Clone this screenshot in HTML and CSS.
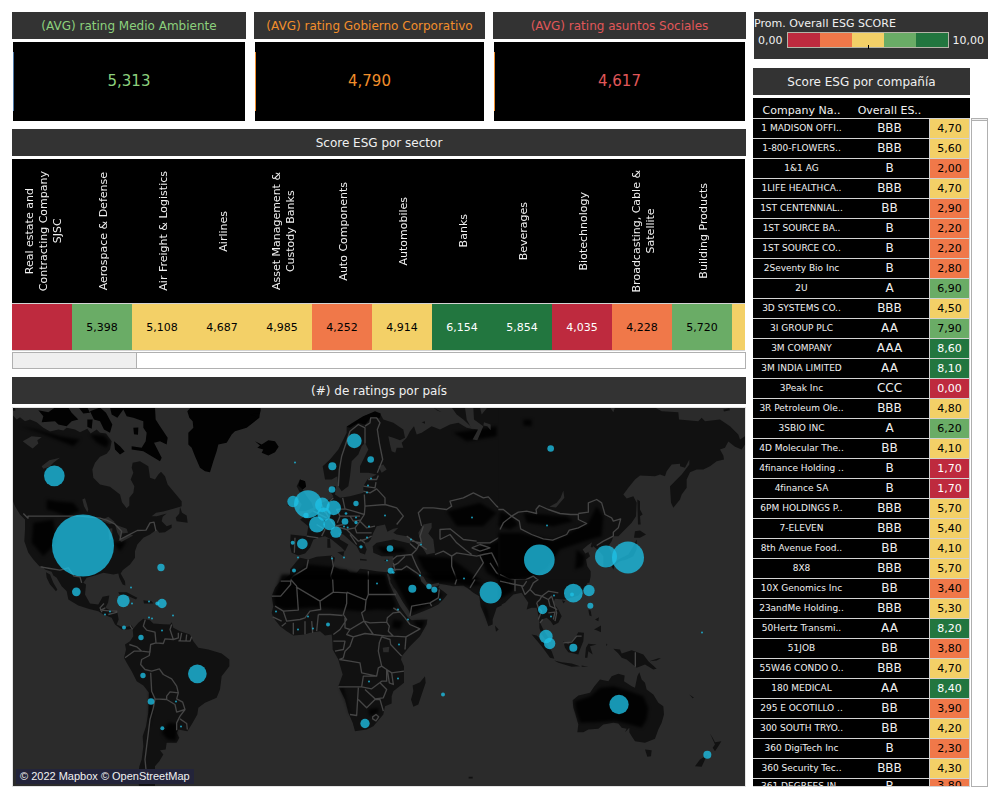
FILE: index.html
```html
<!DOCTYPE html>
<html lang="es">
<head>
<meta charset="utf-8">
<meta name="viewport" content="width=device-width, initial-scale=1">
<title>ESG ratings</title>
<link rel="stylesheet" href="styles.css">
</head>
<body>
<main class="dashboard">
  <div class="main-column">
    <section class="kpis">
      <article class="kpi kpi-green">
        <h2 class="panel-title">(AVG) rating Medio Ambiente</h2>
        <p class="kpi-value">5,313</p>
      </article>
      <article class="kpi kpi-orange">
        <h2 class="panel-title">(AVG) rating Gobierno Corporativo</h2>
        <p class="kpi-value">4,790</p>
      </article>
      <article class="kpi kpi-red">
        <h2 class="panel-title">(AVG) rating asuntos Sociales</h2>
        <p class="kpi-value">4,617</p>
      </article>
    </section>

    <section class="sectors">
      <h2 class="panel-title">Score ESG por sector</h2>
      <div class="sector-view">
        <table class="sector-table">
          <thead>
            <tr>
              <th><span>Real estate and<br>Contracting Company<br>SJSC</span></th>
              <th><span>Aerospace &amp; Defense</span></th>
              <th><span>Air Freight &amp; Logistics</span></th>
              <th><span>Airlines</span></th>
              <th><span>Asset Management &amp;<br>Custody Banks</span></th>
              <th><span>Auto Components</span></th>
              <th><span>Automobiles</span></th>
              <th><span>Banks</span></th>
              <th><span>Beverages</span></th>
              <th><span>Biotechnology</span></th>
              <th><span>Broadcasting, Cable &amp;<br>Satellite</span></th>
              <th><span>Building Products</span></th>
              <th></th>
            </tr>
          </thead>
          <tbody>
            <tr>
              <td class="s1"></td>
              <td class="s4">5,398</td>
              <td class="s3">5,108</td>
              <td class="s3">4,687</td>
              <td class="s3">4,985</td>
              <td class="s2">4,252</td>
              <td class="s3">4,914</td>
              <td class="s5">6,154</td>
              <td class="s5">5,854</td>
              <td class="s1">4,035</td>
              <td class="s2">4,228</td>
              <td class="s4">5,720</td>
              <td class="s3"></td>
            </tr>
          </tbody>
        </table>
      </div>
      <div class="scroll-x"><div class="scroll-x-thumb"></div></div>
    </section>

    <section class="countries">
      <h2 class="panel-title">(#) de ratings por país</h2>
      <div class="map">
        <svg class="map-canvas" viewBox="39 114 2196 1137" preserveAspectRatio="xMidYMid slice" role="img" aria-label="(#) de ratings por país">
          <!-- North America and Greenland -->
          <g class="land">
            <path d="M39 138L50 150 60 143 75 155 90 150 110 158 130 175 150 186 175 180 190 183 200 175 225 180 240 188 262 178 272 192 290 180 300 190 318 192 335 215 330 240 320 253 300 262 285 280 277 300 280 325 300 345 330 352 360 375 366 398 380 416 388 408 388 385 400 370 403 350 392 330 400 310 395 295 398 280 420 275 445 290 450 325 465 330 475 315 483 307 495 320 503 345 520 365 545 395 545 410 520 418 490 426 468 430 455 440 470 440 500 432 488 442 485 455 500 470 515 465 515 475 495 488 478 490 470 480 450 495 430 505 412 525 405 545 405 565 390 585 368 602 362 612 375 635 376 648 368 645 358 625 355 612 340 615 310 610 285 618 260 625 250 640 258 645 255 675 270 702 295 705 308 682 328 678 324 700 316 715 330 722 352 728 356 750 350 765 372 775 395 768 400 776 385 780 365 780 345 765 335 745 310 735 295 725 265 718 235 708 205 690 200 665 185 650 170 625 160 618 155 607 135 600 128 590 118 590 100 570 85 550 73 515 75 480 75 450 60 435 45 410 39 395Z"/>
            <path d="M138 608L150 615 160 640 172 660 168 665 150 645 140 625ZM540 412L546 430 560 438 563 460 530 455 527 445 538 432Z"/>
            <path d="M355 668L380 668 412 685 408 690 380 678 358 675ZM430 692L455 695 460 702 432 702ZM39 114L55 114 52 122 39 124Z"/>
          </g>
          <g class="land-dark">
            <path d="M115 122L145 128 165 114 205 114 215 130 235 150 215 155 200 170 175 165 165 155 125 158 130 140ZM330 114L465 114 467 150 480 170 503 205 500 225 480 215 462 220 485 265 480 275 455 260 430 245 395 240 395 230 425 235 437 215 440 190 430 175 430 155 400 145 380 140 370 120 352 145 335 135ZM270 125L300 114 318 130 337 165 330 190 312 180 300 155 282 150ZM236 114L262 114 270 130 250 132ZM342 215L360 230 374 246 360 255 345 240ZM400 175L415 174 414 196 402 194ZM262 150L278 150 275 178 262 172Z"/>
            <path d="M572 114L782 114 778 145 740 175 705 185 695 195 680 220 655 225 650 245 640 275 630 308 615 305 600 295 585 260 575 235 565 225 565 190 580 175 578 155 568 145 562 125Z"/>
          </g>
          <g class="shade">
            <path d="M140 390L170 395 220 400 240 425 200 440 160 425 140 420ZM270 195L312 198 328 215 320 235 290 220ZM100 460L160 450 170 520 130 560 95 520ZM340 520L380 515 360 545ZM60 170L110 180 180 200 240 210 220 230 120 190Z"/>
          </g>
          <g class="sea">
            <path d="M68 215L95 200 125 203 112 212 115 222 98 237 85 228ZM125 290L148 272 180 265 160 280 148 292 130 298ZM247 390L255 386 260 402 265 420 262 428 252 410ZM302 452L325 442 345 458 330 464ZM325 478L337 476 337 505 328 512ZM345 465L380 478 384 490 366 492 362 508 352 490ZM355 512L390 495 400 498 365 517ZM45 115L75 120 65 135 48 132Z"/>
          </g>
          <g class="border">
            <path d="M70 432L84 446 84 440 240 440 300 446 320 452 345 464 365 485 360 510 385 497 412 483 438 482 450 460 462 458 468 485M122 592L150 597 180 602 205 595 222 620 240 622 245 640M312 702L300 715 306 728M316 715L302 722 328 724 352 725M325 735L352 728M390 768L398 780"/>
          </g>

          <!-- South America -->
          <g transform="translate(0 630)">
            <path class="land" d="M398 150L415 130 430 118 450 122 460 132 490 134 510 135 515 128 520 145 540 155 570 165 580 185 595 205 625 210 665 222 688 240 688 260 665 290 660 330 650 355 615 370 595 385 592 405 575 435 562 455 535 450 530 460 538 475 530 490 500 490 497 510 480 512 490 525 478 545 465 560 465 622 418 622 413 600 418 560 425 540 430 500 428 470 438 440 445 400 447 340 430 318 410 305 395 275 380 250 372 235 378 210 375 195 390 185 400 170Z"/>
            <path class="shade" d="M505 430L532 432 530 462 528 484 502 480 485 460ZM449 335L456 335 456 400 446 440Z"/>
            <path class="border" d="M436 120L430 140 440 152 465 158 468 190 452 195 450 218 425 215 410 202 388 195M425 215L402 215 375 235M452 195L448 228 425 240 422 255 435 270 455 275 478 268 490 285 515 298 530 320 535 340 510 337 500 350 500 360 465 358 455 335 452 280M465 158L468 190 490 192 495 178 520 180 510 150 515 135M520 180L535 175 535 160M540 184L545 160M558 184L560 165M535 184L570 185 575 172M535 340L530 358 548 368 555 390 530 398 525 375 500 360M555 390L540 410 530 430 530 452M540 418L560 432 562 450M465 358L460 385 450 420 445 460 440 500 435 540 438 570"/>
          </g>

          <!-- Europe, north Africa, west Asia -->
          <g transform="translate(750 0)">
            <path class="land" d="M375 128L392 135 400 150 430 160 460 180 465 205 450 212 430 205 415 200 420 225 425 245 436 250 440 235 460 235 455 220 470 205 480 185 492 170 500 195 515 190 545 170 570 180 600 165 625 160 650 175 672 180 640 150 620 135 605 114 760 114 760 640 90 640 120 615 120 600 140 575 150 565 175 570 200 562 245 558 255 565 250 590 270 600 290 600 300 610 320 610 330 598 350 600 380 605 410 608 424 605 430 580 430 560 395 560 370 550 368 530 380 520 430 510 480 522 485 510 470 500 440 495 430 490 445 475 430 478 412 487 405 465 380 470 370 490 362 510 355 518 342 520 350 540 345 555 330 550 320 530 308 520 280 495 265 490 270 510 295 525 285 545 275 535 245 510 225 500 205 505 190 510 180 535 165 552 145 558 125 550 120 530 122 495 170 500 175 470 150 450 165 440 190 425 215 400 240 390 250 380 240 365 245 350 258 350 255 375 270 385 300 380 340 370 340 350 352 330 380 315 355 310 330 310 330 290 340 270 355 240 345 220 335 230 325 255 305 275 300 320 295 350 275 365 265 350 262 320 245 330 225 330 218 290 240 270 265 240 290 190 290 172 310 158 340 140Z"/>
            <path class="land" d="M150 330L165 335 168 350 158 360 170 380 185 400 190 415 165 425 145 425 155 405 145 390 150 370 140 350ZM115 385L135 380 140 400 130 412 113 408ZM262 548L283 545 280 560ZM232 508L240 508 242 535 232 535ZM330 568L350 570 350 574 330 572ZM402 572L416 568 412 577ZM515 158L525 155 525 163ZM550 114L575 128 560 122Z"/>
            <path class="land-dark" d="M15 215L35 225 55 212 75 215 86 232 75 248 55 258 35 250 40 240 22 235 30 228ZM0 114L32 120 30 132 0 134ZM0 165L18 150 18 140 0 135ZM150 330L165 335 168 352 158 360 145 348ZM290 172L340 140 375 125 392 132 390 145 360 148 345 165 325 160 300 175Z"/>
            <path class="shade" d="M132 616L175 585 245 592 330 612 405 618 405 655 90 655ZM440 600L480 600 520 655 430 655ZM500 558L600 565 650 600 700 640 560 635 520 600ZM680 535L760 510 760 640 710 610ZM590 425L690 400 740 430 700 470 620 470ZM380 530L460 535 470 550 400 552ZM610 190L740 170 740 200 650 215Z"/>
            <g class="sea">
              <path d="M505 490L520 465 545 460 545 475 535 492 550 510 555 550 530 555 515 530ZM645 114L670 114 672 150 700 170 682 212 668 210 684 180 665 178 650 150ZM385 290L400 285 410 300 395 310ZM410 612L416 614 426 640 418 642ZM690 114L712 114 695 135ZM702 158L722 165 722 182 712 170 700 168Z"/>
            </g>
            <path class="border" d="M265 350L268 300 275 260 290 215 300 185 325 165 345 175 345 222M345 170L360 160 362 145 380 145 390 160 382 180 388 220 398 270 382 310M355 330L380 330 385 318M340 350L375 355 378 338M340 365L360 370 380 358 405 385 405 405 345 410 343 375M278 385L285 418 310 425 343 435 345 410M405 405L440 415 460 440 440 465M343 435L330 455 350 475 375 470M285 418L260 420 270 440 300 440 330 440M250 385L235 400 228 430 240 450 255 470 280 465M170 500L205 505M215 405L225 430M190 425L230 445M200 465L225 480 215 500M255 470L290 480 315 475 330 455M290 480L310 500 325 515 345 510 365 500M315 475L320 490 345 490 365 490M300 495L320 525 M330 510L345 520M270 440L262 460M300 440L310 455 330 452M135 505L133 550"/>
            <path class="border" d="M470 500L500 520 530 540M480 522L500 540 485 555 440 560 428 570M485 515L515 520M500 540L510 520M485 555L500 590 512 612M428 590L445 580 465 560M430 600L455 600 470 590 500 610 512 620M430 580L435 605M515 470L505 430 520 415 550 415 590 420 605 410 600 395 640 385 670 370 700 385 715 382 740 410 770 430M515 520L510 500 520 470M570 510L570 480 600 478 640 510 680 515M570 510L600 495 620 520 645 540 665 555M605 560L620 550 680 560 700 555M605 560L605 590 620 630 660 640 700 580 690 560M555 555L580 545 605 560M680 520L720 520 770 490M665 535L690 525 720 535 690 545 665 535M700 555L725 550 745 590 770 620M720 580L740 610 780 635M245 560L250 590 242 620 255 650M175 570L170 595 130 620M120 632L130 620M355 605L355 640"/>
          </g>

          <!-- East Asia -->
          <g transform="translate(1500 0)">
            <path class="land" d="M-5 114L330 114 340 128 345 114 465 114 485 125 535 128 537 150 595 155 605 145 615 155 660 150 690 170 715 195 720 210 735 200 735 225 725 240 705 232 685 216 675 235 660 240 670 258 672 270 650 275 630 290 610 300 590 300 570 308 560 330 560 355 545 375 540 390 520 415 513 400 510 350 525 335 545 315 568 285 568 270 555 295 540 290 540 283 515 285 500 305 495 320 480 315 465 320 420 318 405 330 385 355 370 375 380 387 400 380 410 400 408 440 395 460 375 480 355 500 340 500 335 515 325 530 335 550 337 580 325 595 310 592 310 560 298 545 280 530 265 548 270 560 258 570 262 590 272 605 272 620 268 640 -5 640Z"/>
            <path class="land" d="M412 390L420 395 420 420 428 435 420 440 422 465 414 465ZM405 485L420 483 438 495 420 505 402 505ZM410 510L410 540 400 560 380 570 360 575 345 585 340 600 335 590 355 570 385 555 400 530ZM670 120L688 116 690 122 672 126Z"/>
            <path class="shade" d="M-5 490L60 490 160 512 200 495 240 470 262 465 290 410 310 440 305 500 270 510 180 540 140 600 90 625 -5 640ZM0 425L35 440 55 465 30 480 -5 470ZM70 150L95 150 95 170 70 168ZM70 430L200 440 220 455 160 470 80 460ZM230 540L255 560 250 590 225 600Z"/>
            <path class="sea" d="M190 363L193 385 168 414 148 412 170 400 182 385ZM248 540L262 528 276 518 272 532 284 540 270 545 256 552Z"/>
            <path class="border" d="M-5 420L10 420 35 440 58 455 62 478 95 495 130 508 158 512 200 495 208 482 235 475 260 462 235 450 235 435 212 435 180 432 145 420 118 408 108 420 110 432 80 425 55 428 35 440M35 440L10 460 0 480M235 432L265 428 265 400 290 390 305 400 315 435 335 445 340 455 362 448 355 475 340 488 340 500M340 500L310 515 290 528M0 615L30 630 75 632 100 620 115 632 110 650M40 630L45 655 75 660"/>
          </g>

          <!-- Africa, Arabia, India -->
          <g transform="translate(750 630)">
            <path class="land" d="M412 0L435 50 450 80 472 112 485 122 532 120 530 135 510 170 480 200 455 230 453 240 462 260 462 310 430 335 425 350 425 372 405 380 400 405 370 440 350 450 315 455 308 430 295 400 285 360 265 320 278 285 265 240 248 210 247 185 245 165 225 168 210 155 180 160 165 165 130 168 110 155 90 140 70 115 65 100 70 80 65 50 75 25 95 0Z"/>
            <path class="land" d="M755 0L755 78 740 85 735 100 728 120 728 135 715 140 705 110 692 80 688 50 670 40 655 28 640 18 610 20 570 13 565 25 580 35 592 45 580 60 565 75 545 85 520 95 482 110 478 95 460 70 440 35 422 10 420 0ZM525 290L527 310 515 345 505 375 490 382 483 360 490 335 488 318 510 308ZM735 138L746 150 738 157ZM656 592L668 592 668 597 656 597Z"/>
            <path class="shade" d="M95 -15L405 -15 428 50 440 80 425 92 380 90 330 95 270 90 190 84 105 90 74 80 70 50 80 25ZM425 -15L500 -15 520 15 560 35 578 45 556 66 520 86 484 100 468 70ZM490 124L525 124 515 150 500 140ZM270 324L280 324 298 395 303 405 298 402 285 360Z"/>
            <path class="shade" d="M520 -15L650 -15 700 15 660 20 600 10 550 8ZM697 70L710 90 718 130 708 110ZM355 390L385 385 385 400 360 410ZM430 120L460 125 450 150 425 145Z"/>
            <path class="sea" d="M508 -14L520 -8 530 8 545 14 566 10 570 16 556 22 545 28 530 22 514 6ZM398 205L418 202 416 218 400 218Z"/>
            <path class="border" d="M92 5L122 5 122 15 92 50 65 50M122 0L140 20 145 92 100 95 75 80M138 22L210 65 212 90 180 95 165 115 150 120 110 125 100 95M210 65L250 38 290 40 290 72 280 105 290 120 270 150 250 165M250 38L248 0M290 38L348 62 345 92 335 100 342 125 300 150 285 145 285 115M355 0L355 45 438 45M348 62L355 45M342 125L360 130 410 128 412 115 430 100 450 98M410 128L418 140 415 155 430 170 468 172 510 148 480 135 465 115 450 98 430 85M342 125L370 165 410 170 430 170M300 150L290 165 310 172 345 162 370 165M310 172L300 200 285 215 280 235 268 240M250 185L285 185 280 210 255 215M268 240L300 245 330 250 335 280 380 290 385 265 395 260 385 215 388 190 395 172M395 172L420 180 422 195 455 230M468 172L465 210M380 290L340 290 335 322 365 328 395 305 410 305 410 270 395 260M410 270L425 280 462 275M425 280L430 315 418 310 412 270M265 322L335 322M325 325L320 408 300 405M325 360L350 385 375 360 390 360 400 395M345 330L375 358 400 355 410 330 390 310M368 412L378 405 386 412 378 424 368 418ZM205 105L240 105 278 108M205 105L200 155M185 125L188 160M165 125L165 165M130 130L130 165M95 140L108 130M68 112L95 125M480 110L485 80 540 70 545 80M540 70L565 55 568 30M620 0L615 15M660 25L675 0"/>
          </g>

          <!-- Southeast Asia and Oceania -->
          <g transform="translate(1500 630)">
            <path class="land" d="M-5 0L268 0 255 25 235 48 215 55 195 60 188 60 165 58 160 70 175 90 185 110 175 130 160 137 152 125 140 115 125 120 120 130 130 150 143 170 150 190 140 185 125 165 118 145 118 120 110 85 95 85 80 90 85 70 65 40 40 45 15 70 -5 80ZM95 165L110 168 135 190 155 215 163 238 150 235 125 200ZM163 243L185 248 215 252 240 260 215 262 175 250ZM245 258L265 262 245 262ZM190 185L205 195 225 175 235 158 252 160 250 185 240 210 235 225 205 218 195 205ZM258 205L265 193 290 195 270 200 278 225 265 215 262 235 255 235ZM340 208L360 210 365 222 395 212 430 225 445 245 470 268 460 270 435 255 410 265 380 240 365 235 355 222ZM448 245L475 236 483 236 470 243ZM265 90L272 93 275 110 268 108ZM285 120L297 113 295 125ZM282 150L303 138 303 158 290 152ZM186 62L196 65 190 72ZM318 192L322 195 320 200ZM435 510L455 512 453 530 442 532ZM630 462L638 475 645 488 664 485 655 500 645 515 638 505 645 495ZM625 525L615 540 605 562 585 560 600 540ZM568 345L582 355 578 356Z"/>
            <path class="land" d="M218 362L235 348 270 340 283 320 300 300 325 305 335 290 355 283 374 288 372 305 395 320 405 325 412 290 418 278 425 300 435 310 440 330 460 345 475 370 490 380 492 405 485 430 475 450 465 478 435 490 405 485 395 470 388 458 388 445 375 458 380 448 365 445 355 432 340 430 310 435 295 448 265 450 250 458 232 458 235 435 225 400 220 385Z"/>
            <path class="shade" d="M224 366L270 350 300 325 340 320 390 335 430 350 445 385 440 420 425 445 390 435 345 424 290 428 240 430 228 395ZM-5 -10L30 -10 45 25 35 38 -5 60Z"/>
            <path class="border" d="M406 218L406 262M45 0L45 35M0 5L45 15 70 20 80 5M65 20L75 45 90 30 100 10 115 0M90 30L105 45 125 50 145 35 175 40M110 70L120 60 125 50M125 50L145 60 150 80 172 90M110 70L115 85 125 95 115 120M145 60L155 50 170 100 165 125M145 100L165 98 160 120M190 190L215 188 230 170 245 170M120 130L128 120"/>
          </g>

          <!-- Rating counts -->
          <g class="bubbles">
            <circle cx="249" cy="528" r="93"/><circle cx="163" cy="319" r="31"/><circle cx="483" cy="594" r="11"/><circle cx="393" cy="654" r="3"/>
            <g transform="translate(0 630)">
              <circle cx="229" cy="37" r="13"/><circle cx="370" cy="64" r="19"/><circle cx="396" cy="72" r="3"/><circle cx="447" cy="66" r="3"/><circle cx="472" cy="72" r="6"/><circle cx="486" cy="72" r="14"/><circle cx="519" cy="108" r="3"/><circle cx="447" cy="114" r="3"/><circle cx="456" cy="117" r="3"/><circle cx="330" cy="96" r="3"/><circle cx="315" cy="105" r="3"/><circle cx="372" cy="144" r="6"/><circle cx="486" cy="153" r="3"/><circle cx="423" cy="174" r="8"/><circle cx="429" cy="288" r="8"/><circle cx="592" cy="283" r="28"/><circle cx="453" cy="366" r="10"/><circle cx="528" cy="366" r="3"/><circle cx="487" cy="446" r="6"/><circle cx="543" cy="441" r="3"/>
            </g>
            <g transform="translate(750 0)">
              <circle cx="135" cy="279" r="3"/><circle cx="313" cy="214" r="22"/><circle cx="362" cy="270" r="10"/><circle cx="247" cy="290" r="12"/><circle cx="246" cy="360" r="10"/><circle cx="363" cy="327" r="3"/><circle cx="354" cy="348" r="3"/><circle cx="351" cy="369" r="3"/><circle cx="318" cy="402" r="8"/><circle cx="174" cy="404" r="42"/><circle cx="129" cy="396" r="17"/><circle cx="217" cy="406" r="22"/><circle cx="251" cy="415" r="22"/><circle cx="222" cy="434" r="20"/><circle cx="168" cy="438" r="8"/><circle cx="201" cy="465" r="24"/><circle cx="238" cy="464" r="18"/><circle cx="258" cy="488" r="17"/><circle cx="285" cy="456" r="10"/><circle cx="288" cy="432" r="4"/><circle cx="318" cy="444" r="3"/><circle cx="318" cy="459" r="5"/><circle cx="357" cy="471" r="3"/><circle cx="282" cy="471" r="3"/><circle cx="293" cy="474" r="3"/><circle cx="405" cy="438" r="3"/><circle cx="351" cy="504" r="3"/><circle cx="333" cy="532" r="5"/><circle cx="157" cy="523" r="16"/><circle cx="128" cy="520" r="6"/><circle cx="144" cy="564" r="3"/><circle cx="132" cy="603" r="6"/><circle cx="246" cy="567" r="3"/><circle cx="282" cy="564" r="3"/><circle cx="411" cy="573" r="3"/><circle cx="420" cy="537" r="10"/><circle cx="422" cy="604" r="9"/><circle cx="430" cy="609" r="4"/><circle cx="381" cy="642" r="3"/><circle cx="483" cy="510" r="3"/><circle cx="513" cy="525" r="3"/><circle cx="510" cy="618" r="3"/><circle cx="642" cy="627" r="3"/><circle cx="666" cy="444" r="3"/>
            </g>
            <g transform="translate(750 630)">
              <circle cx="487" cy="28" r="12"/><circle cx="537" cy="21" r="8"/><circle cx="553" cy="31" r="9"/><circle cx="570" cy="60" r="3"/><circle cx="722" cy="39" r="33"/><circle cx="78" cy="96" r="3"/><circle cx="174" cy="111" r="3"/><circle cx="144" cy="150" r="3"/><circle cx="189" cy="147" r="3"/><circle cx="234" cy="135" r="6"/><circle cx="444" cy="90" r="3"/><circle cx="474" cy="120" r="3"/><circle cx="447" cy="195" r="3"/><circle cx="357" cy="306" r="3"/><circle cx="444" cy="297" r="3"/><circle cx="579" cy="345" r="6"/><circle cx="345" cy="432" r="14"/>
            </g>
            <g transform="translate(1500 0)">
              <circle cx="152" cy="237" r="10"/><circle cx="141" cy="468" r="3"/><circle cx="118" cy="571" r="46"/><circle cx="318" cy="561" r="33"/><circle cx="384" cy="564" r="48"/>
            </g>
            <g transform="translate(1500 630)">
              <circle cx="220" cy="41" r="28"/><circle cx="216" cy="45" r="6"/><circle cx="267" cy="33" r="17"/><circle cx="271" cy="79" r="9"/><circle cx="162" cy="48" r="3"/><circle cx="128" cy="90" r="14"/><circle cx="153" cy="111" r="3"/><circle cx="138" cy="171" r="20"/><circle cx="149" cy="192" r="17"/><circle cx="220" cy="205" r="12"/><circle cx="606" cy="159" r="3"/><circle cx="357" cy="375" r="29"/><circle cx="622" cy="526" r="12"/>
            </g>
          </g>
        </svg>
        <p class="attribution">© 2022 Mapbox © OpenStreetMap</p>
      </div>
    </section>
  </div>

  <aside class="side-column">
    <section class="legend">
      <h2 class="legend-title">Prom. Overall ESG SCORE</h2>
      <div class="legend-scale">
        <span>0,00</span>
        <div class="legend-bar">
          <i class="s1"></i><i class="s2"></i><i class="s3"></i><i class="s4"></i><i class="s5"></i>
        </div>
        <span>10,00</span>
      </div>
    </section>

    <section class="companies">
      <h2 class="panel-title">Score ESG por compañía</h2>
      <div class="company-view">
        <div class="company-clip">
          <table class="company-table">
            <thead><tr><th>Company Na..</th><th>Overall ES..</th><th></th></tr></thead>
            <tbody>
              <tr><td>1 MADISON OFFI..</td><td>BBB</td><td class="s3">4,70</td></tr>
              <tr><td>1-800-FLOWERS..</td><td>BBB</td><td class="s3">5,60</td></tr>
              <tr><td>1&amp;1 AG</td><td>B</td><td class="s2">2,00</td></tr>
              <tr><td>1LIFE HEALTHCA..</td><td>BBB</td><td class="s3">4,70</td></tr>
              <tr><td>1ST CENTENNIAL..</td><td>BB</td><td class="s2">2,90</td></tr>
              <tr><td>1ST SOURCE BA..</td><td>B</td><td class="s2">2,20</td></tr>
              <tr><td>1ST SOURCE CO..</td><td>B</td><td class="s2">2,20</td></tr>
              <tr><td>2Seventy Bio Inc</td><td>B</td><td class="s2">2,80</td></tr>
              <tr><td>2U</td><td>A</td><td class="s4">6,90</td></tr>
              <tr><td>3D SYSTEMS CO..</td><td>BBB</td><td class="s3">4,50</td></tr>
              <tr><td>3I GROUP PLC</td><td>AA</td><td class="s4">7,90</td></tr>
              <tr><td>3M COMPANY</td><td>AAA</td><td class="s5">8,60</td></tr>
              <tr><td>3M INDIA LIMITED</td><td>AA</td><td class="s5">8,10</td></tr>
              <tr><td>3Peak Inc</td><td>CCC</td><td class="s1">0,00</td></tr>
              <tr><td>3R Petroleum Ole..</td><td>BBB</td><td class="s3">4,80</td></tr>
              <tr><td>3SBIO INC</td><td>A</td><td class="s4">6,20</td></tr>
              <tr><td>4D Molecular The..</td><td>BB</td><td class="s3">4,10</td></tr>
              <tr><td>4finance Holding ..</td><td>B</td><td class="s1">1,70</td></tr>
              <tr><td>4finance SA</td><td>B</td><td class="s1">1,70</td></tr>
              <tr><td>6PM HOLDINGS P..</td><td>BBB</td><td class="s3">5,70</td></tr>
              <tr><td>7-ELEVEN</td><td>BBB</td><td class="s3">5,40</td></tr>
              <tr><td>8th Avenue Food..</td><td>BB</td><td class="s3">4,10</td></tr>
              <tr><td>8X8</td><td>BBB</td><td class="s3">5,70</td></tr>
              <tr><td>10X Genomics Inc</td><td>BB</td><td class="s2">3,40</td></tr>
              <tr><td>23andMe Holding..</td><td>BBB</td><td class="s3">5,30</td></tr>
              <tr><td>50Hertz Transmi..</td><td>AA</td><td class="s5">8,20</td></tr>
              <tr><td>51JOB</td><td>BB</td><td class="s2">3,80</td></tr>
              <tr><td>55W46 CONDO O..</td><td>BBB</td><td class="s3">4,70</td></tr>
              <tr><td>180 MEDICAL</td><td>AA</td><td class="s5">8,40</td></tr>
              <tr><td>295 E OCOTILLO ..</td><td>BB</td><td class="s2">3,90</td></tr>
              <tr><td>300 SOUTH TRYO..</td><td>BB</td><td class="s3">4,20</td></tr>
              <tr><td>360 DigiTech Inc</td><td>B</td><td class="s2">2,30</td></tr>
              <tr><td>360 Security Tec..</td><td>BBB</td><td class="s3">4,30</td></tr>
              <tr><td>361 DEGREES IN..</td><td>B</td><td class="s2">3,80</td></tr>
            </tbody>
          </table>
        </div>
        <div class="scroll-y"><div class="scroll-y-thumb"></div></div>
      </div>
    </section>
  </aside>
</main>
</body>
</html>
```
FILE: styles.css
```css
* { box-sizing: border-box; }

body {
  margin: 0;
  background: #fff;
  color: #f0f0f0;
  font-family: "DejaVu Sans", Verdana, sans-serif;
  font-size: 11px;
}

h2, p { margin: 0; font-weight: normal; }

table { border-collapse: separate; border-spacing: 0; table-layout: fixed; }
th, td { padding: 0; font-weight: normal; text-align: center; vertical-align: middle; }

.dashboard {
  display: grid;
  grid-template-columns: minmax(0, 1fr) 235px;
  gap: 7px;
  height: 100vh;
  min-height: 640px;
  padding: 12px 11px 12px 12px;
}

.main-column {
  display: flex;
  flex-direction: column;
  gap: 8px;
  min-height: 0;
}

.panel-title {
  flex: none;
  height: 27px;
  line-height: 28px;
  background: #333;
  font-size: 12px;
  text-align: center;
  white-space: nowrap;
}

/* Score colours */
.s1 { background: #be2a3e; color: #fff; }
.s2 { background: #f07849; color: #000; }
.s3 { background: #f3d067; color: #000; }
.s4 { background: #6aac66; color: #000; }
.s5 { background: #22763f; color: #fff; }

/* Averages */
.kpis {
  display: grid;
  grid-template-columns: 234fr 231fr 253fr;
  gap: 8px;
}
.kpi-green { color: #8cd17d; --mark: #4e79a7; }
.kpi-orange { color: #f28e2b; --mark: #f28e2b; }
.kpi-red { color: #e15759; --mark: #f28e2b; }
.kpi-value {
  height: 79px;
  margin: 3px 1px 0;
  background: linear-gradient(var(--mark), var(--mark)) left center / 1px 59px no-repeat #000;
  font-size: 15px;
  line-height: 79px;
  text-align: center;
}

/* Sectors */
.sector-view {
  margin: 3px 1px 0 0;
  overflow: hidden;
  background: #000;
}
.sector-table { width: 780px; }
.sector-table th {
  width: 60px;
  height: 145px;
  padding: 3px 0 0 3px;
  border-bottom: 1px solid #d3d3d3;
}
.sector-table th span {
  display: inline-block;
  writing-mode: vertical-rl;
  transform: rotate(180deg);
  line-height: 14px;
  white-space: nowrap;
}
.sector-table td {
  height: 47px;
  border-bottom: 1px solid #d3d3d3;
}
.scroll-x {
  height: 17px;
  margin-top: 1px;
  border: 1px solid #b0b0b0;
}
.scroll-x-thumb {
  width: 17%;
  height: 100%;
  border-right: 1px solid #b0b0b0;
  background: #efefef;
}

/* Map */
.countries {
  display: flex;
  flex: 1;
  flex-direction: column;
  min-height: 0;
}
.map {
  position: relative;
  flex: 1;
  min-height: 0;
  margin-top: 3px;
  border: 1px solid #e3e3e3;
  background: #2b2b2b;
}
.map-canvas { display: block; width: 100%; height: 100%; }
.land { fill: #111; }
.land-dark { fill: #020202; }
.shade { fill: #000; fill-opacity: .85; filter: blur(5px); }
.sea { fill: #2b2b2b; }
.border { fill: none; stroke: #454545; stroke-width: 4; stroke-linejoin: round; }
.bubbles { fill: #1ec0e6; fill-opacity: .78; }
.attribution {
  position: absolute;
  bottom: 2px;
  left: 3px;
  padding: 0 4px;
  background: #23243a;
  font: 11px/15px "Liberation Sans", Arial, sans-serif;
}

/* Legend */
.side-column {
  display: flex;
  flex-direction: column;
  gap: 9px;
  min-height: 0;
}
.legend {
  height: 47px;
  margin-left: 1px;
  padding-top: 4px;
  background: #333;
}
.legend-title { font-size: 11px; line-height: 16px; }
.legend-scale {
  display: flex;
  align-items: center;
  gap: 4px;
  height: 16px;
  padding: 0 4px;
}
.legend-bar {
  position: relative;
  display: flex;
  flex: 1;
  height: 16px;
  border: 1px solid #b5b5a8;
}
.legend-bar i { flex: 1; }
.legend-bar::after {
  content: "";
  position: absolute;
  bottom: -2px;
  left: 50%;
  width: 1px;
  height: 4px;
  background: #000;
}

/* Companies */
.companies {
  display: flex;
  flex: 1;
  flex-direction: column;
  min-height: 0;
}
.companies .panel-title { margin-right: 18px; }
.company-view {
  display: flex;
  flex: 1;
  gap: 1px;
  min-height: 0;
  margin-top: 3px;
}
.company-clip {
  flex: 1;
  overflow: hidden;
  border-bottom: 1px solid #d3d3d3;
}
.company-table { width: 100%; background: #000; }
.company-table th {
  height: 21px;
  padding-top: 5px;
  border-bottom: 1px solid #d3d3d3;
  line-height: 15px;
  white-space: nowrap;
}
.company-table th:nth-child(1) { width: 97px; }
.company-table th:nth-child(2) { width: 79px; }
.company-table td {
  height: 20px;
  border-bottom: 1px solid #d3d3d3;
  line-height: 19px;
  white-space: nowrap;
}
.company-table td:nth-child(1) { font-size: 9px; }
.company-table td:nth-child(2) { font-size: 12px; }
.company-table td:nth-child(3) {
  border-right: 1px solid #d3d3d3;
  border-left: 1px solid #d3d3d3;
}
.company-table tr:last-child td {
  line-height: 14px;
  vertical-align: top;
}
.scroll-y {
  width: 17px;
  margin-top: 20px;
  border: 1px solid #b0b0b0;
}
.scroll-y-thumb {
  height: 2px;
  border-bottom: 1px solid #b0b0b0;
  background: #efefef;
}
```
